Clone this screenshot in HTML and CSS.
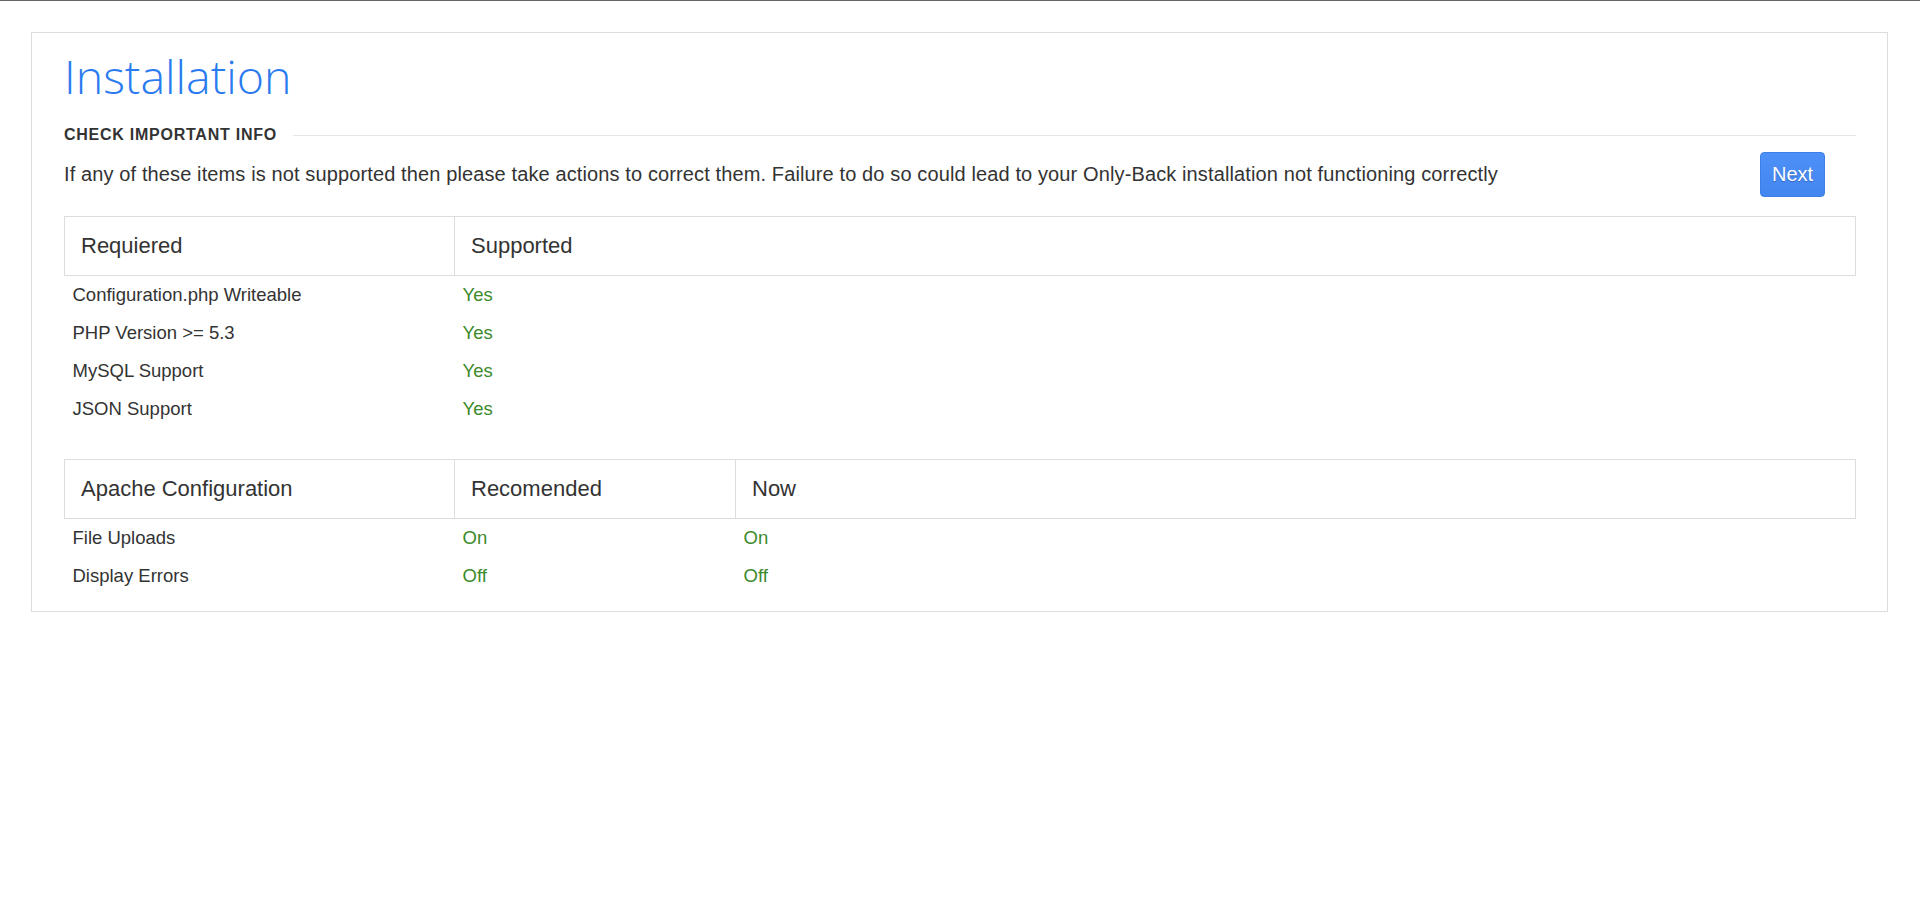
FILE: index.html
```html
<!DOCTYPE html>
<html lang="en">
<head>
<meta charset="utf-8">
<title>Installation</title>
<link rel="stylesheet" href="styles.css">
</head>
<body>
<div class="topbar"></div>
<div class="panel">
  <h1 class="title">Installation</h1>
  <div class="section-head">
    <span class="section-label">CHECK IMPORTANT INFO</span>
    <span class="section-rule"></span>
  </div>
  <div class="intro">
    <p class="intro-text">If any of these items is not supported then please take actions to correct them. Failure to do so could lead to your Only-Back installation not functioning correctly</p>
    <button class="btn-next" type="button">Next</button>
  </div>

  <table class="check-table">
    <colgroup>
      <col class="col-a">
      <col>
    </colgroup>
    <thead>
      <tr><th>Requiered</th><th>Supported</th></tr>
    </thead>
    <tbody>
      <tr><td>Configuration.php Writeable</td><td class="ok">Yes</td></tr>
      <tr><td>PHP Version &gt;= 5.3</td><td class="ok">Yes</td></tr>
      <tr><td>MySQL Support</td><td class="ok">Yes</td></tr>
      <tr><td>JSON Support</td><td class="ok">Yes</td></tr>
    </tbody>
  </table>

  <table class="check-table second">
    <colgroup>
      <col class="col-a">
      <col class="col-b">
      <col>
    </colgroup>
    <thead>
      <tr><th>Apache Configuration</th><th>Recomended</th><th>Now</th></tr>
    </thead>
    <tbody>
      <tr><td>File Uploads</td><td class="ok">On</td><td class="ok">On</td></tr>
      <tr><td>Display Errors</td><td class="ok">Off</td><td class="ok">Off</td></tr>
    </tbody>
  </table>
</div>
</body>
</html>
```
FILE: styles.css
```css
html, body {
  margin: 0;
  padding: 0;
  background: #fff;
}
body {
  font-family: "Liberation Sans", Arial, sans-serif;
  color: #333;
}
.topbar {
  height: 1px;
  background: #666;
}
.panel {
  margin: 31px 32px 0 31px;
  border: 1px solid #ddd;
  padding: 15px 31px 16px 32px;
}
.title {
  margin: 0;
  font-family: "Open Sans", sans-serif;
  font-weight: 300;
  font-size: 46.5px;
  line-height: 57px;
  color: #2b7bf0;
}
.section-head {
  display: flex;
  align-items: center;
  gap: 16px;
  margin-top: 20px;
  height: 20px;
}
.section-label {
  font-size: 16px;
  font-weight: bold;
  letter-spacing: 0.75px;
  color: #333;
  line-height: 20px;
}
.section-rule {
  flex: 1;
  height: 1px;
  background: #e6e6e6;
}
.intro {
  display: flex;
  align-items: center;
  justify-content: space-between;
  margin-top: 7px;
}
.intro-text {
  margin: 0;
  font-size: 20px;
  letter-spacing: 0.12px;
  color: #333;
}
.btn-next {
  margin-right: 31px;
  width: 65px;
  height: 45px;
  border: 1px solid #3d7fe6;
  border-radius: 4px;
  background: linear-gradient(#4d90f8, #4386f0);
  color: #fff;
  font-family: "Liberation Sans", Arial, sans-serif;
  font-size: 20px;
  text-shadow: 0 1px 1px rgba(0,0,0,0.25);
  padding: 0;
}
.check-table {
  width: 100%;
  border-collapse: collapse;
  margin-top: 19px;
}
.check-table.second {
  margin-top: 31px;
}
.col-a { width: 390px; }
.col-b { width: 281px; }
.check-table th {
  border: 1px solid #ddd;
  height: 58px;
  padding: 0 16px;
  text-align: left;
  font-weight: normal;
  font-size: 22px;
  color: #333;
}
.check-table td {
  height: 38px;
  padding: 0 8px;
  font-size: 18.5px;
  color: #333;
}
.check-table td.ok {
  color: #3c8a2a;
}
```
